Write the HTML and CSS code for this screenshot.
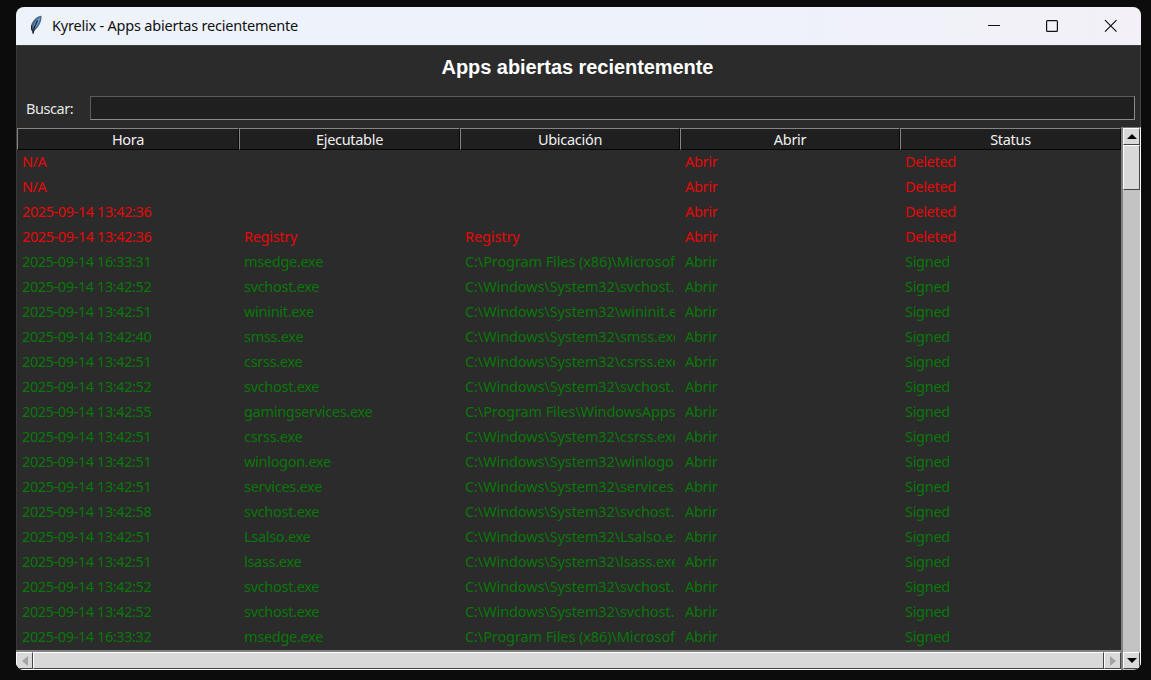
FILE: index.html
```html
<!DOCTYPE html>
<html lang="es">
<head>
<meta charset="utf-8">
<title>Kyrelix - Apps abiertas recientemente</title>
<link rel="stylesheet" href="styles.css">
</head>
<body>
<main class="window">
  <header class="titlebar">
    <svg class="feather" width="14" height="20" viewBox="0 0 14 20">
      <path d="M12.500 .8C8.500 1 4 4.500 2 10.500L2.300 14.500 4 19.500 5.500 15.500C9.500 12.500 13 7 12.500 .8Z" fill="#52677c"/>
      <path d="M11.300 2.200C7.500 4 4.600 8 4.500 13L6 13C8.500 10.500 11 7 11.300 2.200Z" fill="#5b9be0"/>
      <path d="M8.500 5.500C6.500 9 4.800 12 4 18.500M2.600 10.500V14L4 16" fill="none" stroke="#182330" stroke-width="1.200"/>
    </svg>
    <span class="caption">Kyrelix - Apps abiertas recientemente</span>
    <svg class="controls" width="130" height="14" viewBox="0 0 130 14" fill="none" stroke="#111" stroke-width="1.200">
      <path d="M1 6.500H13"/>
      <rect x="59.600" y="1.600" width="10.800" height="10.800" rx="1"/>
      <path d="M118 1.200L129.500 12.700M129.500 1.200L118 12.700"/>
    </svg>
  </header>
  <section class="client">
    <h1 class="heading"><span>Apps abiertas recientemente</span></h1>
    <div class="search"><label class="label" for="q">Buscar:</label><input class="entry" id="q"></div>
    <div class="panes">
      <div class="left">
        <div class="row head">
          <div class="th">Hora</div><div class="th">Ejecutable</div><div class="th">Ubicación</div><div class="th">Abrir</div><div class="th">Status</div>
        </div>
        <div class="rows" id="rows"></div>
        <div class="hbar">
          <div class="btn hbtn"><svg width="6" height="10" viewBox="0 0 6 10"><path d="M6 0V10L0 5Z" fill="#a3a3a3"/></svg></div>
          <div class="btn hthumb"></div>
          <div class="btn hbtn"><svg width="6" height="10" viewBox="0 0 6 10"><path d="M0 0V10L6 5Z" fill="#a3a3a3"/></svg></div>
        </div>
      </div>
      <div class="vbar">
        <div class="btn vbtn"><svg width="10" height="5" viewBox="0 0 10 5"><path d="M0 5H10L5 0Z"/></svg></div>
        <div class="btn vthumb"></div>
        <div class="trough"></div>
        <div class="btn vbtn"><svg width="10" height="5" viewBox="0 0 10 5"><path d="M0 0H10L5 5Z"/></svg></div>
      </div>
    </div>
  </section>
</main>
<script src="app.js"></script>
</body>
</html>
```

FILE: styles.css
```css
* { box-sizing: border-box; }
body { margin: 0; width: 1151px; height: 680px; overflow: hidden; background: #0c0c0c; padding: 7px 10px 10px 16px; font-family: "Noto Sans", "Open Sans", sans-serif; }
.window { width: 1125px; height: 663px; border-radius: 8px; overflow: hidden; background: #2b2b2b; display: flex; flex-direction: column; }
.titlebar { height: 38px; flex: none; display: flex; align-items: center; background: linear-gradient(90deg, #eef3fa, #eef2fb 60%, #f3f0f7); padding: 0 24px 0 13px; }
.feather { margin-top: -3px; }
.caption { margin: -2px 0 0 9px; font-size: 14.500px; line-height: 20px; letter-spacing: -0.210px; color: #111; white-space: nowrap; }
.controls { margin-left: auto; }
.client { flex: 1; display: flex; flex-direction: column; min-height: 0; border-top: 1px solid #3c3c3c; box-shadow: inset 1px 0 #3a3a3a, inset -1px 0 #444; }
.heading { margin: 0; height: 50px; padding: 9px 2px 0 0; text-align: center; font: bold 20px/24px "Liberation Sans", sans-serif; letter-spacing: -0.060px; color: #fff; }
.search { height: 24px; display: flex; padding: 0 6px 0 10px; }
.label { width: 64px; font-size: 14.500px; line-height: 24px; letter-spacing: -0.450px; color: #e6e6e6; }
.entry { flex: 1; height: 24px; border: 1px solid; border-color: #5c5c5c #8c8c8c #8c8c8c #5c5c5c; outline: none; background: #1f1f1f; color: #fff; border-radius: 0; }
.panes { margin-top: 7px; flex: 1; display: flex; }
.left { width: 1105px; display: flex; flex-direction: column; }
.row { display: grid; grid-template-columns: 222px 221px 220px 220px 221px; height: 25px; padding-left: 1px; }
.head { height: 23px; padding-top: 1px; }
.th { background: #1f1f1f; border: 1px solid; border-color: #858585 #0a0a0a #050505 #858585; text-align: center; font-size: 14.500px; line-height: 20px; letter-spacing: -0.300px; color: #f0f0f0; }
.rows { height: 500px; }
.td { margin: 0 5px; overflow: hidden; white-space: nowrap; font-size: 14.500px; line-height: 23px; letter-spacing: -0.300px; }
.date { letter-spacing: -0.400px; }
.path { letter-spacing: -0.100px; }
.deleted { color: #e60808; }
.signed { color: #087808; }
.hbar { height: 20px; display: flex; border-top: 2px solid #828282; border-bottom: 1px solid #fff; background: #c3c3c3; }
.btn { background: #d9d9d9; border: 1px solid; border-color: #fff #444 #444 #fff; display: flex; align-items: center; justify-content: center; }
.hbtn { width: 17px; }
.hthumb { flex: 1; }
.vbar { width: 20px; display: flex; flex-direction: column; border-left: 2px solid #828282; border-right: 1px solid #fff; border-top: 1px solid #777; background: #c3c3c3; }
.vbtn { height: 17px; flex: none; }
.vbar .vbtn:last-child { margin-bottom: 1px; }
.vthumb { height: 45px; flex: none; }
.trough { flex: 1; }
```

FILE: app.js
```js
const sys = "C:\\Windows\\System32\\";
const edge = "C:\\Program Files (x86)\\Microsof";
const host = sys + "svchost.";
const data = [
  ["N/A", "", ""], ["N/A", "", ""], ["2025-09-14 13:42:36", "", ""],
  ["2025-09-14 13:42:36", "Registry", "Registry"],
  ["2025-09-14 16:33:31", "msedge.exe", edge],
  ["2025-09-14 13:42:52", "svchost.exe", host],
  ["2025-09-14 13:42:51", "wininit.exe", sys + "wininit.e"],
  ["2025-09-14 13:42:40", "smss.exe", sys + "smss.exe"],
  ["2025-09-14 13:42:51", "csrss.exe", sys + "csrss.exe"],
  ["2025-09-14 13:42:52", "svchost.exe", host],
  ["2025-09-14 13:42:55", "gamingservices.exe", "C:\\Program Files\\WindowsApps"],
  ["2025-09-14 13:42:51", "csrss.exe", sys + "csrss.exe"],
  ["2025-09-14 13:42:51", "winlogon.exe", sys + "winlogo"],
  ["2025-09-14 13:42:51", "services.exe", sys + "services."],
  ["2025-09-14 13:42:58", "svchost.exe", host],
  ["2025-09-14 13:42:51", "Lsalso.exe", sys + "Lsalso.ex"],
  ["2025-09-14 13:42:51", "lsass.exe", sys + "lsass.exe"],
  ["2025-09-14 13:42:52", "svchost.exe", host],
  ["2025-09-14 13:42:52", "svchost.exe", host],
  ["2025-09-14 16:33:32", "msedge.exe", edge]
];
const rows = document.getElementById("rows");
data.forEach(([time, exe, path], i) => {
  const row = document.createElement("div");
  row.className = "row " + (i < 4 ? "deleted" : "signed");
  [time, exe, path, "Abrir", i < 4 ? "Deleted" : "Signed"].forEach((text, col) => {
    const cell = document.createElement("div");
    cell.className = "td" + (col === 0 ? " date" : col === 2 ? " path" : "");
    cell.textContent = text;
    row.append(cell);
  });
  rows.append(row);
});
```
